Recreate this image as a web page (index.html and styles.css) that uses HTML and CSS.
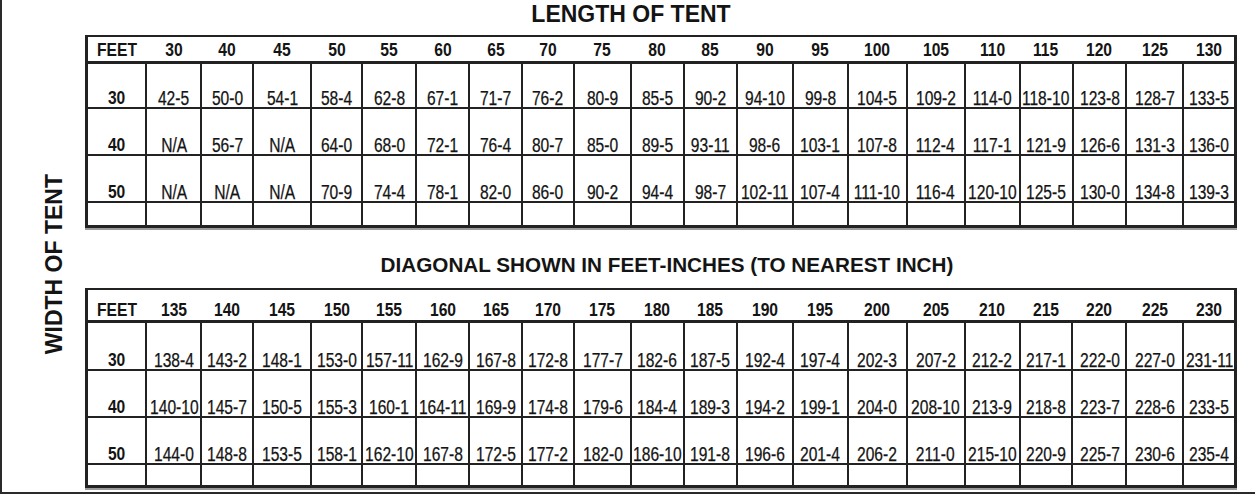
FILE: index.html
```html
<!DOCTYPE html>
<html lang="en">
<head>
<meta charset="utf-8">
<title>Tent diagonal chart</title>
<link rel="stylesheet" href="styles.css">
</head>
<body>
<div class="page">
  <div class="side"><span class="side-label">WIDTH OF TENT</span></div>
  <div class="main">
    <h1 class="title title-length">LENGTH OF TENT</h1>
    <table class="chart chart-a">
      <colgroup>
        <col class="w60"><col class="w55"><col class="w52"><col class="w58"><col class="w51"><col class="w54"><col class="w53"><col class="w53"><col class="w52"><col class="w57"><col class="w53"><col class="w53"><col class="w56"><col class="w55"><col class="w59"><col class="w58"><col class="w55"><col class="w53"><col class="w54"><col class="w57"><col class="w52">
      </colgroup>
      <thead>
        <tr class="head"><th><span>FEET</span></th><th><span>30</span></th><th><span>40</span></th><th><span>45</span></th><th><span>50</span></th><th><span>55</span></th><th><span>60</span></th><th><span>65</span></th><th><span>70</span></th><th><span>75</span></th><th><span>80</span></th><th><span>85</span></th><th><span>90</span></th><th><span>95</span></th><th><span>100</span></th><th><span>105</span></th><th><span>110</span></th><th><span>115</span></th><th><span>120</span></th><th><span>125</span></th><th><span>130</span></th></tr>
      </thead>
      <tbody>
        <tr class="r1"><th><span>30</span></th><td><span>42-5</span></td><td><span>50-0</span></td><td><span>54-1</span></td><td><span>58-4</span></td><td><span>62-8</span></td><td><span>67-1</span></td><td><span>71-7</span></td><td><span>76-2</span></td><td><span>80-9</span></td><td><span>85-5</span></td><td><span>90-2</span></td><td><span>94-10</span></td><td><span>99-8</span></td><td><span>104-5</span></td><td><span>109-2</span></td><td><span>114-0</span></td><td><span>118-10</span></td><td><span>123-8</span></td><td><span>128-7</span></td><td><span>133-5</span></td></tr>
        <tr class="r2"><th><span>40</span></th><td><span>N/A</span></td><td><span>56-7</span></td><td><span>N/A</span></td><td><span>64-0</span></td><td><span>68-0</span></td><td><span>72-1</span></td><td><span>76-4</span></td><td><span>80-7</span></td><td><span>85-0</span></td><td><span>89-5</span></td><td><span>93-11</span></td><td><span>98-6</span></td><td><span>103-1</span></td><td><span>107-8</span></td><td><span>112-4</span></td><td><span>117-1</span></td><td><span>121-9</span></td><td><span>126-6</span></td><td><span>131-3</span></td><td><span>136-0</span></td></tr>
        <tr class="r3"><th><span>50</span></th><td><span>N/A</span></td><td><span>N/A</span></td><td><span>N/A</span></td><td><span>70-9</span></td><td><span>74-4</span></td><td><span>78-1</span></td><td><span>82-0</span></td><td><span>86-0</span></td><td><span>90-2</span></td><td><span>94-4</span></td><td><span>98-7</span></td><td><span>102-11</span></td><td><span>107-4</span></td><td><span>111-10</span></td><td><span>116-4</span></td><td><span>120-10</span></td><td><span>125-5</span></td><td><span>130-0</span></td><td><span>134-8</span></td><td><span>139-3</span></td></tr>
        <tr class="blank"><th></th><td></td><td></td><td></td><td></td><td></td><td></td><td></td><td></td><td></td><td></td><td></td><td></td><td></td><td></td><td></td><td></td><td></td><td></td><td></td><td></td></tr>
      </tbody>
    </table>
    <h2 class="title title-diag">DIAGONAL SHOWN IN FEET-INCHES (TO NEAREST INCH)</h2>
    <table class="chart chart-b">
      <colgroup>
        <col class="w60"><col class="w55"><col class="w52"><col class="w58"><col class="w51"><col class="w54"><col class="w53"><col class="w53"><col class="w52"><col class="w57"><col class="w53"><col class="w53"><col class="w56"><col class="w55"><col class="w59"><col class="w58"><col class="w55"><col class="w53"><col class="w54"><col class="w57"><col class="w52">
      </colgroup>
      <thead>
        <tr class="head"><th><span>FEET</span></th><th><span>135</span></th><th><span>140</span></th><th><span>145</span></th><th><span>150</span></th><th><span>155</span></th><th><span>160</span></th><th><span>165</span></th><th><span>170</span></th><th><span>175</span></th><th><span>180</span></th><th><span>185</span></th><th><span>190</span></th><th><span>195</span></th><th><span>200</span></th><th><span>205</span></th><th><span>210</span></th><th><span>215</span></th><th><span>220</span></th><th><span>225</span></th><th><span>230</span></th></tr>
      </thead>
      <tbody>
        <tr class="r1"><th><span>30</span></th><td><span>138-4</span></td><td><span>143-2</span></td><td><span>148-1</span></td><td><span>153-0</span></td><td><span>157-11</span></td><td><span>162-9</span></td><td><span>167-8</span></td><td><span>172-8</span></td><td><span>177-7</span></td><td><span>182-6</span></td><td><span>187-5</span></td><td><span>192-4</span></td><td><span>197-4</span></td><td><span>202-3</span></td><td><span>207-2</span></td><td><span>212-2</span></td><td><span>217-1</span></td><td><span>222-0</span></td><td><span>227-0</span></td><td><span>231-11</span></td></tr>
        <tr class="r2"><th><span>40</span></th><td><span>140-10</span></td><td><span>145-7</span></td><td><span>150-5</span></td><td><span>155-3</span></td><td><span>160-1</span></td><td><span>164-11</span></td><td><span>169-9</span></td><td><span>174-8</span></td><td><span>179-6</span></td><td><span>184-4</span></td><td><span>189-3</span></td><td><span>194-2</span></td><td><span>199-1</span></td><td><span>204-0</span></td><td><span>208-10</span></td><td><span>213-9</span></td><td><span>218-8</span></td><td><span>223-7</span></td><td><span>228-6</span></td><td><span>233-5</span></td></tr>
        <tr class="r3"><th><span>50</span></th><td><span>144-0</span></td><td><span>148-8</span></td><td><span>153-5</span></td><td><span>158-1</span></td><td><span>162-10</span></td><td><span>167-8</span></td><td><span>172-5</span></td><td><span>177-2</span></td><td><span>182-0</span></td><td><span>186-10</span></td><td><span>191-8</span></td><td><span>196-6</span></td><td><span>201-4</span></td><td><span>206-2</span></td><td><span>211-0</span></td><td><span>215-10</span></td><td><span>220-9</span></td><td><span>225-7</span></td><td><span>230-6</span></td><td><span>235-4</span></td></tr>
        <tr class="blank"><th></th><td></td><td></td><td></td><td></td><td></td><td></td><td></td><td></td><td></td><td></td><td></td><td></td><td></td><td></td><td></td><td></td><td></td><td></td><td></td><td></td></tr>
      </tbody>
    </table>
  </div>
</div>
</body>
</html>
```

FILE: styles.css
```css
html, body {
  margin: 0;
  padding: 0;
  background: #ffffff;
}

body {
  font-family: "Liberation Sans", Arial, sans-serif;
  color: #141414;
}

.page {
  display: flex;
  width: 1255px;
  height: 494px;
  box-sizing: border-box;
  border-left: 2px solid #2a2a2a;
  border-bottom: 2px solid #2a2a2a;
}

.side {
  flex: none;
  width: 82px;
  box-sizing: border-box;
  padding: 37px 0 0 22px;
  display: flex;
  align-items: center;
  justify-content: center;
}

.side-label {
  writing-mode: vertical-rl;
  transform: rotate(180deg);
  font-weight: bold;
  font-size: 23px;
  line-height: 1;
  white-space: nowrap;
}

.main {
  flex: none;
  width: 1153px;
  display: flex;
  flex-direction: column;
  padding-left: 1px;
  box-sizing: border-box;
}

.title {
  margin: 0;
  font-weight: bold;
  text-align: center;
  white-space: nowrap;
  color: #141414;
}

.title-length {
  font-size: 23px;
  line-height: 28px;
  height: 35px;
  padding-right: 60px;
}

.title-diag {
  font-size: 20.7px;
  line-height: 24px;
  margin: 25px 0 11px;
  padding-left: 12px;
}

.chart {
  border-collapse: collapse;
  table-layout: fixed;
  border: 3px solid #222;
  border-top-width: 2px;
  box-shadow: 0 2px 0 #9a9a9a;
}

.w51 { width: 51px; }
.w52 { width: 52px; }
.w53 { width: 53px; }
.w54 { width: 54px; }
.w55 { width: 55px; }
.w56 { width: 56px; }
.w57 { width: 57px; }
.w58 { width: 58px; }
.w59 { width: 59px; }
.w60 { width: 60px; }

.chart th,
.chart td {
  padding: 0;
  border: 2px solid #222;
  text-align: center;
  vertical-align: bottom;
  white-space: nowrap;
  overflow: visible;
}

.chart span {
  display: inline-block;
  margin: 0 -14px;
}

.chart thead th {
  border-left: none;
  border-right: none;
  border-bottom: 3px solid #222;
  font-size: 18px;
  font-weight: bold;
  line-height: 16px;
}

.chart thead th span {
  transform: scaleX(0.87);
}

.chart-a thead th { padding-bottom: 3px; }
.chart-b thead th { padding-bottom: 2px; }

.chart tbody td {
  font-size: 19.5px;
  line-height: 16px;
  font-weight: normal;
  padding-bottom: 1px;
  -webkit-text-stroke: 0.25px #141414;
}

.chart tbody td span {
  transform: scaleX(0.8);
}

.chart tbody th {
  font-size: 19px;
  line-height: 16px;
  font-weight: bold;
  padding-bottom: 1px;
}

.chart tbody th span {
  transform: scaleX(0.82);
}

.chart-a .head { height: 26px; }
.chart-a .r1 { height: 46px; }
.chart-a .r2 { height: 47px; }
.chart-a .r3 { height: 47px; }
.chart-a .blank { height: 24px; }

.chart-b .head { height: 33px; }
.chart-b .r1 { height: 48px; }
.chart-b .r2 { height: 47px; }
.chart-b .r3 { height: 47px; }
.chart-b .blank { height: 23px; }
```
